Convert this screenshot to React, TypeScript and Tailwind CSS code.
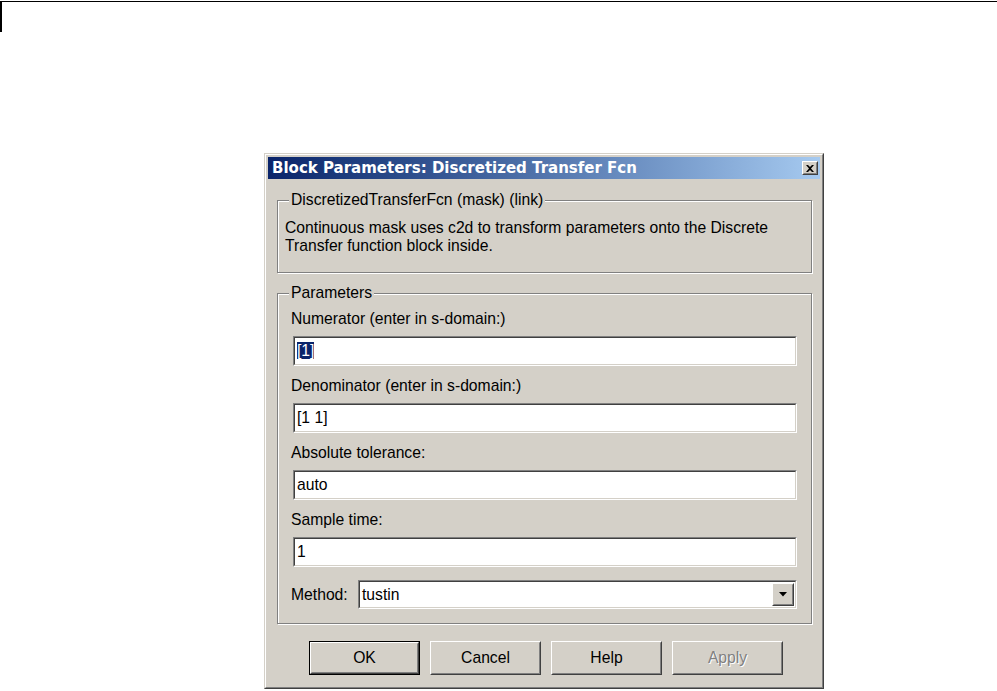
import React from "react";

const font = "font-['Liberation_Sans',Arial,sans-serif]";

function Sunken({ children, className = "" }: { children?: React.ReactNode; className?: string }) {
  return (
    <div className={"border border-t-[#808080] border-l-[#808080] border-r-white border-b-white " + className}>
      <div className="h-full border border-t-[#404040] border-l-[#404040] border-r-[#d4d0c8] border-b-[#d4d0c8] bg-white flex items-center">
        {children}
      </div>
    </div>
  );
}

function Raised({ children, className = "" }: { children?: React.ReactNode; className?: string }) {
  return (
    <div className={"border border-t-white border-l-white border-r-[#404040] border-b-[#404040] bg-[#d4d0c8] " + className}>
      <div className="h-full border border-t-[#d4d0c8] border-l-[#d4d0c8] border-r-[#808080] border-b-[#808080] flex items-center justify-center">
        {children}
      </div>
    </div>
  );
}

function Group({ label, children, className = "" }: { label: string; children: React.ReactNode; className?: string }) {
  return (
    <div className={"relative w-[535px] ml-[9px] border border-[#808080] shadow-[inset_1px_1px_0_#fff,1px_1px_0_#fff] " + className}>
      <span className="absolute left-[11px] -top-[10px] px-[2px] bg-[#d4d0c8] leading-[18px]">{label}</span>
      {children}
    </div>
  );
}

function Field({ label, value, selected, first }: { label: string; value: string; selected?: boolean; first?: boolean }) {
  return (
    <div className={first ? "" : "mt-[10px]"}>
      <div className="h-[20px] leading-[20px] pl-[13px]">{label}</div>
      <Sunken className="mt-[7px] h-[30px] ml-[15px] w-[504px]">
        <span className="pl-[2px]">
          {selected ? <span className="bg-[#0a246a] text-white">{value}</span> : value}
        </span>
      </Sunken>
    </div>
  );
}

function Button({ label, isDefault, disabled }: { label: string; isDefault?: boolean; disabled?: boolean }) {
  const text = (
    <span className={disabled ? "text-[#808080] [text-shadow:1px_1px_0_#fff]" : "text-black"}>{label}</span>
  );
  if (isDefault) {
    return (
      <div className="w-[111px] h-[34px] border border-black">
        <Raised className="h-full">{text}</Raised>
      </div>
    );
  }
  return <Raised className="w-[111px] h-[34px]">{text}</Raised>;
}

export default function App() {
  return (
    <div className={"w-[997px] h-[691px] bg-white overflow-hidden text-[15.7px] text-black " + font}>
      <div className="mt-[1px] h-[31px] border-t border-l-2 border-black" />
      <div className="pl-[264px] pt-[121px]">
        <div className="w-[560px] h-[536px] border border-t-[#d4d0c8] border-l-[#d4d0c8] border-r-[#404040] border-b-[#404040] bg-[#d4d0c8]">
          <div className="h-full border border-t-white border-l-white border-r-[#808080] border-b-[#808080] p-[2px]">
            {/* Title bar */}
            <div className="h-[22px] flex items-center justify-between bg-gradient-to-r from-[#0a246a] to-[#a6caf0]">
              <span className="pl-[4px] text-white font-bold text-[15px] leading-none font-['DejaVu_Sans',sans-serif]">
                Block Parameters: Discretized Transfer Fcn
              </span>
              <Raised className="w-[16px] h-[14px] mr-[2px]">
                <svg width="8" height="7" viewBox="0 0 8 7">
                  <path d="M0 0h2l2 2 2-2h2L5 3.5 8 7H6L4 5 2 7H0l3-3.5z" fill="#000" />
                </svg>
              </Raised>
            </div>

            {/* Group 1 */}
            <Group label="DiscretizedTransferFcn (mask) (link)" className="mt-[21px] pt-[18px] pb-[17px] pl-[7px]">
              <div className="leading-[18px]">
                Continuous mask uses c2d to transform parameters onto the Discrete
                <br />
                Transfer function block inside.
              </div>
            </Group>

            {/* Group 2 */}
            <Group label="Parameters" className="mt-[20px] pt-[15px] pb-[14px]">
              <Field first label="Numerator (enter in s-domain:)" value="[1]" selected />
              <Field label="Denominator (enter in s-domain:)" value="[1 1]" />
              <Field label="Absolute tolerance:" value="auto" />
              <Field label="Sample time:" value="1" />
              <div className="mt-[13px] flex items-center">
                <span className="pl-[13px] w-[80px]">Method:</span>
                <Sunken className="h-[29px] w-[439px]">
                  <div className="flex-1 pl-[2px]">tustin</div>
                  <Raised className="w-[22px] h-[23px] mr-[1px]">
                    <svg width="8" height="5" viewBox="0 0 8 5">
                      <path d="M0 0h8L4 4.5z" fill="#000" />
                    </svg>
                  </Raised>
                </Sunken>
              </div>
            </Group>

            {/* Buttons */}
            <div className="mt-[17px] pl-[41px] flex gap-[10px]">
              <Button label="OK" isDefault />
              <Button label="Cancel" />
              <Button label="Help" />
              <Button label="Apply" disabled />
            </div>
          </div>
        </div>
      </div>
    </div>
  );
}
